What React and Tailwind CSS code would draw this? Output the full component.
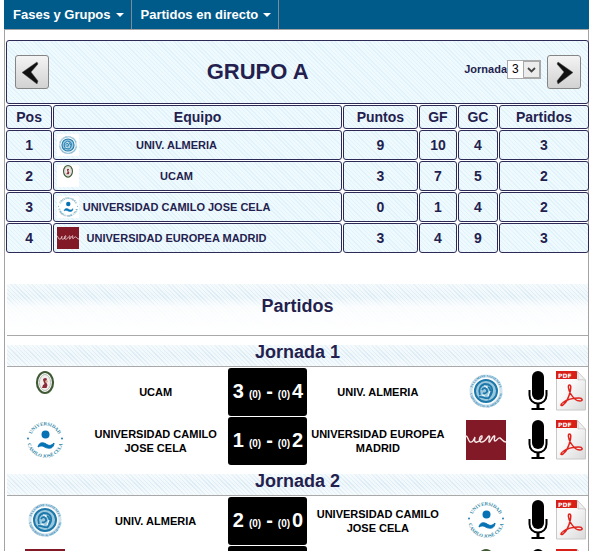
import { useState } from "react";

const equipos = {
  almeria: "UNIV. ALMERIA",
  ucam: "UCAM",
  cela: "UNIVERSIDAD CAMILO JOSE CELA",
  europea: "UNIVERSIDAD EUROPEA MADRID",
};

const clasificacion = [
  { pos: 1, equipo: "almeria", puntos: 9, gf: 10, gc: 4, partidos: 3 },
  { pos: 2, equipo: "ucam", puntos: 3, gf: 7, gc: 5, partidos: 2 },
  { pos: 3, equipo: "cela", puntos: 0, gf: 1, gc: 4, partidos: 2 },
  { pos: 4, equipo: "europea", puntos: 3, gf: 4, gc: 9, partidos: 3 },
];

const jornadas = [
  {
    numero: 1,
    partidos: [
      { local: "ucam", visitante: "almeria", goles: [3, 4] },
      { local: "cela", visitante: "europea", goles: [1, 2] },
    ],
  },
  {
    numero: 2,
    partidos: [
      { local: "almeria", visitante: "cela", goles: [2, 0] },
      { local: "europea", visitante: "ucam", goles: [2, 1] },
    ],
  },
];

const EscudoAlmeria = ({ id }) => (
  <>
    <defs>
      <path id={`${id}-a`} d="M6 20a14 14 0 0 1 28 0" />
      <path id={`${id}-b`} d="M3.500 20a16.500 16.500 0 0 0 33 0" />
    </defs>
    <circle cx="20" cy="20" r="15" fill="none" stroke="#cfe4ef" strokeWidth="3" />
    <g fontSize="3.300" fontWeight="bold" fill="#2f86b3" fontFamily="Liberation Serif, serif" textAnchor="middle">
      <text><textPath href={`#${id}-a`} startOffset="50%">IN LUMINE SAPIENTIA</textPath></text>
      <text><textPath href={`#${id}-b`} startOffset="50%">UNIVERSITAS ALMERIENSIS</textPath></text>
    </g>
    <circle cx="20" cy="20" r="11" fill="#9cc8de" stroke="#1d78aa" strokeWidth="2" />
    <path d="M14 24c-2-5 0-10 5-11 5 0 8 3 7 8-1 4-3 5-4 7M16 19c2-3 4-2 5 0s-2 4-4 3M22 16c3 1 3 5 1 8M13 26c4-1 6 2 9 1" fill="none" stroke="#1d78aa" strokeWidth="1.8" />
    <path d="M18 15c2 0 3 1 3 2M24 20l-2 5M16 24l3 1" fill="none" stroke="#f2f9fc" strokeWidth="1.2" />
  </>
);

const EscudoUcam = () => (
  <>
    <ellipse cx="20" cy="11.5" rx="8" ry="10.5" fill="#fff" stroke="#3f5a35" strokeWidth="2.2" />
    <ellipse cx="20" cy="11.5" rx="5.6" ry="8" fill="#f1efec" stroke="#b9bdb4" strokeWidth="1" />
    <path d="M18 9c0-2 3-3 4-1l-1 3 1.500 3-1 3h-4.500l1-3 1.500-1z" fill="#8d2b3d" />
    <circle cx="21.500" cy="10.500" r="1.300" fill="#d8b49a" />
  </>
);

const EscudoCela = ({ id }) => (
  <>
    <defs>
      <path id={`${id}-a`} d="M5.900 16.500a14.500 14.500 0 0 1 28.200 0" />
      <path id={`${id}-b`} d="M2.300 23a18 18 0 0 0 35.400 0" />
    </defs>
    <g fontSize="4.800" fill="#2f86a3" fontWeight="bold" fontFamily="Liberation Serif, serif" textAnchor="middle">
      <text><textPath href={`#${id}-a`} startOffset="50%">UNIVERSIDAD</textPath></text>
      <text><textPath href={`#${id}-b`} startOffset="50%">CAMILO JOSÉ CELA</textPath></text>
    </g>
    <circle cx="3" cy="18.500" r="0.900" fill="#1173ae" />
    <circle cx="37" cy="18.500" r="0.900" fill="#1173ae" />
    <circle cx="20.500" cy="14.500" r="4" fill="#0873b4" />
    <path d="M13 27c1-5 5-5 8-3 3 2 5 2 8-1 0 3-2 6-6 5-4 0-5-4-10-1z" fill="#0873b4" stroke="#0873b4" />
  </>
);

const EscudoEuropea = () => (
  <>
    <rect width="40" height="40" fill="#821927" />
    <path
      d="M0 16c2 0 2 5 4 6 3 1 4-3 5-5-1 4 0 6 2 5 2 0 6-4 5-6-2-1-4 5-1 6 4 1 6-5 8-6 2 0-1 5 0 6s3-5 5-6-1 5 1 5 3-4 5-3 3 4 6 4"
      fill="none"
      stroke="#f7e8e8"
      strokeWidth="1.400"
      strokeLinecap="round"
    />
  </>
);

const escudos = {
  almeria: EscudoAlmeria,
  ucam: EscudoUcam,
  cela: EscudoCela,
  europea: EscudoEuropea,
};

const Escudo = ({ equipo, id, className }) => {
  const Dibujo = escudos[equipo];
  return (
    <svg viewBox="0 0 40 40" className={`overflow-visible ${className}`} aria-hidden="true">
      <Dibujo id={id} />
    </svg>
  );
};

const IconoMicro = () => (
  <svg viewBox="0 0 20 40" className="h-10 w-5" aria-hidden="true">
    <rect x="4" y="0" width="12" height="29" rx="6" />
    <path d="M1.500 19v5c0 5 3.500 8.500 8.500 8.500s8.500-3.500 8.500-8.500v-5" fill="none" stroke="#000" strokeWidth="2" />
    <path d="M8.500 32h3v5h5v2h-13v-2h5z" />
  </svg>
);

const IconoPdf = () => (
  <svg viewBox="0 0 30 40" className="h-10 w-[30px]" aria-hidden="true">
    <defs>
      <linearGradient id="hoja" x1="0" y1="0" x2="1" y2="1">
        <stop offset="0.4" stopColor="#fafafa" />
        <stop offset="1" stopColor="#d9d9d9" />
      </linearGradient>
    </defs>
    <path d="M.5.500h20.500l8.500 9v29.500H.5z" fill="url(#hoja)" stroke="#c8c8c8" />
    <path d="M0 0h21v8H0z" fill="#d81f18" />
    <path d="M21 0l9 9.500c-3-1-6-1-8-.5.500-3 0-6-1-9z" fill="#f1f1f1" stroke="#bdbdbd" strokeWidth="0.700" />
    <text x="2" y="6.500" fontSize="6" fontWeight="bold" fill="#fff" fontFamily="DejaVu Sans, sans-serif">PDF</text>
    <path
      d="M13.500 14c-2 0-1 5 1 8.500s6 7.500 9.500 7.500 2.500-3-1-3c-6 0-12 1.500-16 4.500-3 2-2.500 4 0 2.500 4-3 6.500-10 7.500-15 .5-3 .5-5-1-5z"
      fill="none"
      stroke="#e0221b"
      strokeWidth="1.500"
    />
  </svg>
);

const BotonFlecha = ({ label, onClick, children }) => (
  <button
    type="button"
    aria-label={label}
    onClick={onClick}
    className="h-[34px] w-[34px] shrink-0 rounded-[3px] border border-[#858585] bg-linear-to-b from-[#f4f4f4] to-[#d2d2d2]"
  >
    <svg viewBox="0 0 32 32" className="h-8 w-8" aria-hidden="true">
      {children}
    </svg>
  </button>
);

const trama = "bg-[repeating-linear-gradient(45deg,#effaff_0_2px,#e2f2fa_2px_3px)]";
const celda = `rounded-[3px] border border-[#2d2a58] p-0 text-center ${trama}`;

const Nombre = ({ children }) => (
  <span className="text-center text-[11px] leading-[14px] font-bold text-black">{children}</span>
);

const Partido = ({ partido, id }) => (
  <li className="grid grid-cols-[76fr_146fr_79px_141fr_76fr_28px_36px] bg-white">
    <Escudo equipo={partido.local} id={`${id}-l`} className="mt-[3px] h-10 w-10 justify-self-center" />
    <div className="flex items-center justify-center">
      <Nombre>{equipos[partido.local]}</Nombre>
    </div>
    <div className="flex h-12 items-baseline justify-center gap-[5px] rounded-[3px] bg-black text-xl leading-[47px] font-bold text-white">
      <span>{partido.goles[0]}</span>
      <span className="text-[10px]">(0)</span>
      <span>-</span>
      <span className="flex items-baseline gap-0.5">
        <span className="text-[10px]">(0)</span>
        <span>{partido.goles[1]}</span>
      </span>
    </div>
    <div className="flex items-center justify-center">
      <Nombre>{equipos[partido.visitante]}</Nombre>
    </div>
    <Escudo equipo={partido.visitante} id={`${id}-v`} className="mt-[3px] h-10 w-10 justify-self-center" />
    <a href="#audio" aria-label="Escuchar partido" className="mt-[3px] justify-self-center">
      <IconoMicro />
    </a>
    <a href="#acta" aria-label="Acta en PDF" className="mt-[3px] mr-0.5 justify-self-end">
      <IconoPdf />
    </a>
  </li>
);

const App = () => {
  const [jornada, setJornada] = useState(3);

  return (
    <div className="h-screen overflow-x-hidden overflow-y-auto bg-white pl-1 font-['Liberation_Sans',Arial,sans-serif] text-[#241f4e] [scrollbar-width:none]">
      <nav className="flex h-[29px] bg-[#005b8a] text-[13px] font-bold text-white">
        {["Fases y Grupos", "Partidos en directo"].map((opcion) => (
          <button key={opcion} type="button" className="flex items-center gap-[5px] border-r border-[#7f8a99] pr-[7px] pl-[9px]">
            {opcion}
            <svg viewBox="0 0 8 4" className="h-1 w-2" aria-hidden="true">
              <path d="M0 0h8l-4 4z" fill="#fff" />
            </svg>
          </button>
        ))}
      </nav>

      <main className="border border-b-0 border-[#a3a3a3] pt-[9px]">
        {/* Clasificación */}
        <table className="w-[calc(100%+2px)] table-fixed border-separate border-spacing-px text-sm leading-5 font-bold">
          <colgroup>
            <col className="w-[8%]" />
            <col />
            <col className="w-[13%]" />
            <col className="w-[38px]" />
            <col className="w-[40px]" />
            <col className="w-[90px]" />
          </colgroup>
          <thead>
            <tr className="h-16">
              <td colSpan={6} className={celda}>
                <div className="flex items-center pr-[7px] pl-2">
                  <BotonFlecha label="Jornada anterior" onClick={() => setJornada(Math.max(1, jornada - 1))}>
                    <path d="M21 6L6 16.500 21 28l1-3-7-9 7-8z" fill="#111" stroke="#555" strokeWidth="0.500" />
                  </BotonFlecha>
                  <h1 className="flex-1 pl-0.5 text-[22px] leading-7">GRUPO A</h1>
                  <div className="mr-1.5 mb-1.5 flex items-center text-[11px]">
                    <label htmlFor="jornada">Jornada</label>
                    <div className="relative">
                      <select
                        id="jornada"
                        value={jornada}
                        onChange={(e) => setJornada(Number(e.target.value))}
                        className="block h-[19px] w-[34px] appearance-none border border-[#a9a9a9] bg-white pl-1 text-xs leading-4 font-normal text-black"
                      >
                        <option value={1}>1</option>
                        <option value={2}>2</option>
                        <option value={3}>3</option>
                      </select>
                      <svg viewBox="0 0 17 17" className="pointer-events-none absolute top-px right-px h-[17px] w-[17px]" aria-hidden="true">
                        <rect x="0.500" y="0.500" width="16" height="16" fill="#ececec" stroke="#a9a9a9" />
                        <path d="M5 7l3.500 3.500L12 7" fill="none" stroke="#444" strokeWidth="1.800" />
                      </svg>
                    </div>
                  </div>
                  <BotonFlecha label="Jornada siguiente" onClick={() => setJornada(Math.min(3, jornada + 1))}>
                    <path d="M10 6l15 10.500L10 28l-1-3 7-9-7-8z" fill="#111" stroke="#555" strokeWidth="0.500" />
                  </BotonFlecha>
                </div>
              </td>
            </tr>
            <tr className="h-6">
              {["Pos", "Equipo", "Puntos", "GF", "GC", "Partidos"].map((titulo) => (
                <th key={titulo} scope="col" className={celda}>{titulo}</th>
              ))}
            </tr>
          </thead>
          <tbody>
            {clasificacion.map((fila) => (
              <tr key={fila.pos} className="h-[30px]">
                <td className={celda}>{fila.pos}</td>
                <td className={celda}>
                  <div className="flex items-center pr-[67px] pl-[3px]">
                    <Escudo equipo={fila.equipo} id={`tabla-${fila.equipo}`} className="h-[22px] w-[22px] shrink-0 bg-white" />
                    <span className="flex-1 text-[11px] whitespace-nowrap">{equipos[fila.equipo]}</span>
                  </div>
                </td>
                <td className={celda}>{fila.puntos}</td>
                <td className={celda}>{fila.gf}</td>
                <td className={celda}>{fila.gc}</td>
                <td className={celda}>{fila.partidos}</td>
              </tr>
            ))}
          </tbody>
        </table>

        {/* Partidos */}
        <section className="mt-[30px] pl-0.5 text-center text-lg font-bold">
          <h2 className="border-b border-[#a9a9a9] bg-[linear-gradient(#ffffff66,#ffffff00_25%,#ffffffcc_45%,#fff),repeating-linear-gradient(45deg,#f0f8fc_0_2px,#dcebf4_2px_3px)] pt-2 pb-[15px] leading-7">
            Partidos
          </h2>
          {jornadas.map(({ numero, partidos }) => (
            <div key={numero} className="mt-[9px]">
              <h3 className="mb-px border-b border-[#a9a9a9] bg-[linear-gradient(#ffffff66,#ffffff00_50%,#ffffff66),repeating-linear-gradient(45deg,#f0f8fc_0_2px,#dcebf4_2px_3px)] pb-[7px] leading-[14px]">
                Jornada {numero}
              </h3>
              <ul className="flex flex-col gap-px">
                {partidos.map((partido) => (
                  <Partido key={partido.local} partido={partido} id={`j${numero}-${partido.local}`} />
                ))}
              </ul>
            </div>
          ))}
        </section>
      </main>
    </div>
  );
};

export default App;
